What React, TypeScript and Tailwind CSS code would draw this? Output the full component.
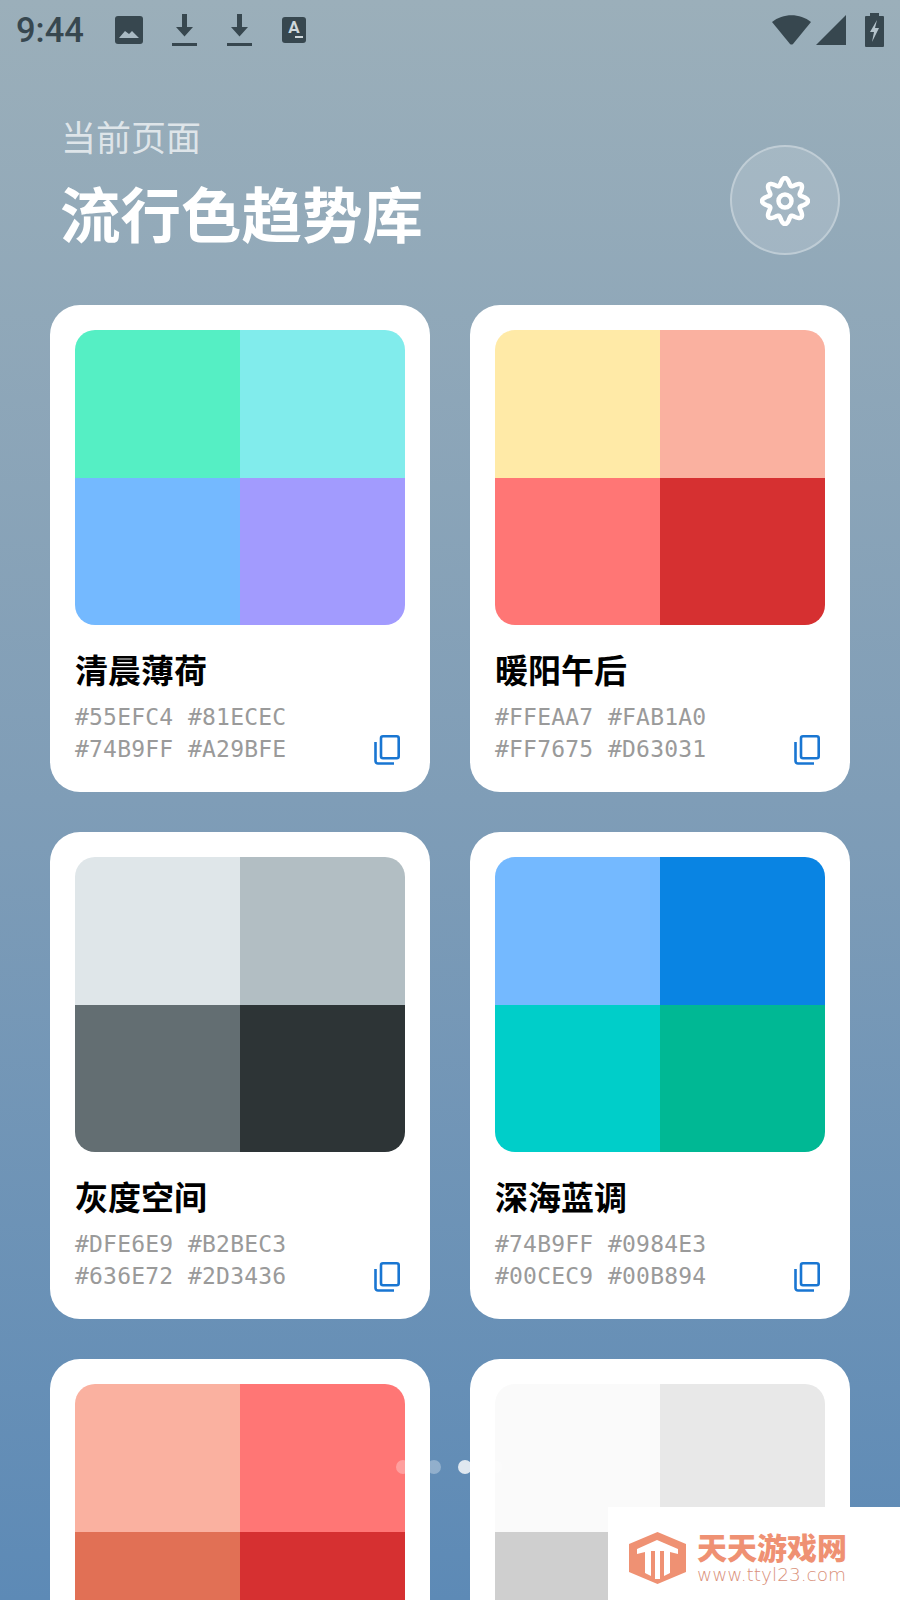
type Palette = { name?: string; colors: string[] };

const palettes: Palette[] = [
  { name: "清晨薄荷", colors: ["#55EFC4", "#81ECEC", "#74B9FF", "#A29BFE"] },
  { name: "暖阳午后", colors: ["#FFEAA7", "#FAB1A0", "#FF7675", "#D63031"] },
  { name: "灰度空间", colors: ["#DFE6E9", "#B2BEC3", "#636E72", "#2D3436"] },
  { name: "深海蓝调", colors: ["#74B9FF", "#0984E3", "#00CEC9", "#00B894"] },
  // last row runs off the bottom of the screen, no labels visible
  { colors: ["#FAB1A0", "#FF7675", "#E17055", "#D63031"] },
  { colors: ["#FAFAFA", "#E8E8E8", "#CFCFCF", "#B5B5B5"] },
];

const gearPath = () => {
  const pts: string[] = [];
  for (let i = 0; i < 240; i++) {
    const a = (i / 240) * Math.PI * 2;
    const r = 19.5 + 3.5 * Math.cos(8 * a);
    pts.push(`${(25 + r * Math.cos(a)).toFixed(2)} ${(25 + r * Math.sin(a)).toFixed(2)}`);
  }
  return `M${pts.join("L")}Z`;
};

function DownloadIcon({ className }: { className: string }) {
  return (
    <svg viewBox="0 0 25 32" className={className} fill="currentColor">
      <path d="M10 0h5v13h6l-8.500 9.500L4 13h6z" />
      <rect y="29" width="25" height="3" />
    </svg>
  );
}

function StatusBar() {
  return (
    <div className="flex h-[60px] items-center justify-between px-4 text-[#37474f]">
      <div className="flex items-center">
        <span className="w-[99px] font-['Roboto'] text-[34.500px] font-medium leading-none">9:44</span>
        <svg viewBox="0 0 28 28" className="h-7 w-7">
          <rect width="28" height="28" rx="3" fill="currentColor" />
          <path d="M4 22l6-7 4 3 3-3 7 7z" fill="#a9bac3" />
        </svg>
        <DownloadIcon className="ml-[29px] h-8 w-[25px]" />
        <DownloadIcon className="ml-[30px] h-8 w-[25px]" />
        <div className="ml-[30px] flex h-[26px] w-6 flex-col items-center rounded-[3px] bg-current">
          <span className="font-['Roboto'] text-[17px] font-bold leading-[20px] text-[#cfd8dc]">A</span>
          <span className="ml-[10px] mt-[-1px] h-[2px] w-[8px] bg-[#cfd8dc]" />
        </div>
      </div>
      <div className="flex items-center">
        <svg viewBox="0 0 39 30" className="h-[30px] w-[39px]" fill="currentColor">
          <path d="M0 7C11-2 28-2 39 7L21 29q-1.500 1-3 0z" />
        </svg>
        <svg viewBox="0 0 30 30" className="ml-[5px] h-[30px] w-[30px]" fill="currentColor">
          <path d="M0 30L30 0v30z" />
        </svg>
        <svg viewBox="0 0 19 34" className="ml-[19px] h-[34px] w-[19px]" fill="currentColor">
          <path d="M5 0h9v3h4a1 1 0 0 1 1 1v29a1 1 0 0 1-1 1H1a1 1 0 0 1-1-1V4a1 1 0 0 1 1-1h4z" />
          <path d="M12 7L5 19h4l-2 10 7-14h-4z" fill="#b4c3cb" />
        </svg>
      </div>
    </div>
  );
}

function CopyIcon() {
  return (
    <svg viewBox="0 0 26 30" className="mr-[5px] h-[30px] w-[26px]" fill="none" stroke="#1976d2" strokeWidth="2.600">
      <rect x="7" y="1.300" width="17.700" height="22" rx="2" />
      <path d="M1.500 7v19a2.500 2.500 0 0 0 2.500 2.500h16" />
    </svg>
  );
}

function PaletteCard({ palette }: { palette: Palette }) {
  const { name, colors } = palette;
  return (
    <div className="h-[487px] rounded-[30px] bg-white p-[25px]">
      <div className="grid h-[295px] grid-cols-2 grid-rows-2 overflow-hidden rounded-[20px]">
        {colors.map((c, i) => (
          <div key={i} style={{ backgroundColor: c }} />
        ))}
      </div>
      {name && (
        <>
          <h2 className="mt-[20px] text-[33px] font-bold leading-[48px] text-black">{name}</h2>
          <div className="mt-[8px] flex items-end justify-between">
            <div className="grid grid-cols-[113px_auto] font-['DejaVu_Sans_Mono'] text-[23px] leading-[32px] tracking-[0.2px] text-[#9a9a9a]">
              {colors.map((c) => (
                <span key={c}>{c}</span>
              ))}
            </div>
            <CopyIcon />
          </div>
        </>
      )}
    </div>
  );
}

export default function App() {
  return (
    <div className="relative h-[1600px] w-[900px] overflow-hidden bg-[linear-gradient(to_bottom,#9bafba_0%,#7f9db7_50%,#5d8ab6_100%)] font-['Noto_Sans_CJK_SC','Noto_Sans',sans-serif]">
      <StatusBar />
      <div className="flex items-start justify-between pl-[61px] pr-[60px] pt-[52px]">
        <div>
          <div className="text-[35px] leading-[48px] text-white/70">当前页面</div>
          <h1 className="-ml-[1px] mt-[14px] text-[60.500px] font-bold leading-[76px] text-white">流行色趋势库</h1>
        </div>
        <button className="mt-[33px] flex h-[110px] w-[110px] items-center justify-center rounded-full border-2 border-white/30 bg-white/15">
          <svg viewBox="0 0 50 50" className="mt-[2px] h-[50px] w-[50px]" fill="none" stroke="white" strokeWidth="4.500">
            <path d={gearPath()} strokeLinejoin="round" />
            <circle cx="25" cy="25" r="6.500" />
          </svg>
        </button>
      </div>
      <div className="mt-[50px] grid grid-cols-2 gap-x-10 gap-y-[40px] px-[50px]">
        {palettes.map((p) => (
          <PaletteCard key={p.colors.join()} palette={p} />
        ))}
      </div>
      {/* page dots float over the grid */}
      <div className="absolute left-[396px] top-[1460px] flex gap-[17px]">
        <span className="h-[14px] w-[14px] rounded-full bg-white/30" />
        <span className="h-[14px] w-[14px] rounded-full bg-white/30" />
        <span className="h-[14px] w-[14px] rounded-full bg-white/80" />
        <span className="h-[14px] w-[14px] rounded-full bg-white/10" />
      </div>
      {/* watermark */}
      <div className="absolute bottom-0 right-0 flex h-[93px] w-[292px] items-center gap-[11px] bg-white pl-[21px] pt-[8px]">
        <svg viewBox="0 0 57 52" className="h-[52px] w-[57px]">
          <path d="M28.500 0L57 12v28L28.500 52 0 40V12z" fill="#ef9173" />
          <path d="M8 17l20-9 21 9v5l-8-2v21l-6 3V19H31v28h-5V19H22v25l-6-3V20l-8 2z" fill="white" />
        </svg>
        <div className="w-[152px]">
          <div className="text-[30px] font-black leading-[34px] text-[#ef9173]">天天游戏网</div>
          <div className="font-['DejaVu_Sans'] text-[18.500px] font-light leading-[24px] text-[#d9907a]">www.ttyl23.com</div>
        </div>
      </div>
    </div>
  );
}
